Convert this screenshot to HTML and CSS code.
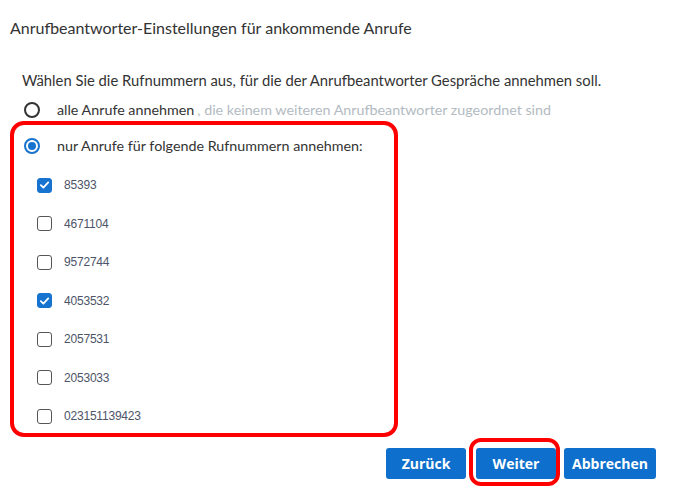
FILE: index.html
```html
<!DOCTYPE html>
<html lang="de">
<head>
<meta charset="utf-8">
<link rel="stylesheet" href="styles.css">
</head>
<body>
<div class="page">
  <h1 class="title">Anrufbeantworter-Einstellungen für ankommende Anrufe</h1>
  <p class="intro">Wählen Sie die Rufnummern aus, für die der Anrufbeantworter Gespräche annehmen soll.</p>
  <div class="radio-row first">
    <span class="radio"></span>
    <span class="label">alle Anrufe annehmen</span><span class="hint">, die keinem weiteren Anrufbeantworter zugeordnet sind</span>
  </div>
  <div class="highlight">
    <div class="radio-row second">
      <span class="radio on"><span class="dot"></span></span>
      <span class="label">nur Anrufe für folgende Rufnummern annehmen:</span>
    </div>
    <ul class="numbers">
      <li><span class="check on"><svg viewBox="0 0 16 16" width="16" height="16"><path d="M3.5 8.2 L6.6 11.2 L12.6 4.8" fill="none" stroke="#fff" stroke-width="2.2" stroke-linecap="round" stroke-linejoin="round"/></svg></span><span class="num">85393</span></li>
      <li><span class="check"></span><span class="num">4671104</span></li>
      <li><span class="check"></span><span class="num">9572744</span></li>
      <li><span class="check on"><svg viewBox="0 0 16 16" width="16" height="16"><path d="M3.5 8.2 L6.6 11.2 L12.6 4.8" fill="none" stroke="#fff" stroke-width="2.2" stroke-linecap="round" stroke-linejoin="round"/></svg></span><span class="num">4053532</span></li>
      <li><span class="check"></span><span class="num">2057531</span></li>
      <li><span class="check"></span><span class="num">2053033</span></li>
      <li><span class="check"></span><span class="num">023151139423</span></li>
    </ul>
  </div>
  <div class="buttons">
    <button class="btn">Zurück</button>
    <button class="btn marked">Weiter</button>
    <button class="btn wide">Abbrechen</button>
  </div>
</div>
</body>
</html>
```

FILE: styles.css
```css
html, body {
  margin: 0;
  padding: 0;
  background: #fff;
}
body {
  font-family: Lato, "Open Sans", sans-serif;
  color: #333;
  width: 691px;
  height: 489px;
  overflow: hidden;
}
.page {
  padding: 18px 0 0 10px;
}
.title {
  margin: 0;
  font-size: 16px;
  font-weight: normal;
  line-height: 20px;
  color: #333;
}
.intro {
  margin: 32px 0 0 12px;
  font-size: 14.8px;
  line-height: 20px;
}
.radio-row {
  display: flex;
  align-items: center;
  font-size: 14.3px;
  line-height: 20px;
}
.radio-row.first {
  margin: 10px 0 0 14px;
}
.radio-row.first .label {
  margin-left: 17px;
}
.hint {
  color: #b3bbc2;
  margin-left: 3px;
}
.radio {
  width: 12px;
  height: 12px;
  border: 2px solid #333;
  border-radius: 50%;
  display: flex;
  align-items: center;
  justify-content: center;
  flex: none;
}
.radio.on {
  border-color: #1673cf;
}
.dot {
  width: 8px;
  height: 8px;
  border-radius: 50%;
  background: #1673cf;
}
.highlight {
  width: 380px;
  height: 308px;
  border: 4px solid #f00;
  border-radius: 14px;
  margin-top: 1px;
}
.radio-row.second {
  margin: 11px 0 0 10px;
}
.radio-row.second .label {
  margin-left: 17px;
}
.numbers {
  list-style: none;
  margin: 21px 0 0 23px;
  padding: 0;
  display: flex;
  flex-direction: column;
  gap: 22.5px;
}
.numbers li {
  display: flex;
  align-items: center;
  height: 16px;
}
.check {
  width: 13px;
  height: 13px;
  border: 1.5px solid #555;
  border-radius: 3px;
  flex: none;
  display: flex;
  align-items: center;
  justify-content: center;
}
.check.on {
  background: #1673cf;
  border-color: #1673cf;
}
.check svg {
  display: block;
}
.num {
  margin-left: 12px;
  font-family: "Liberation Sans", sans-serif;
  font-size: 12px;
  letter-spacing: -0.2px;
  color: #4d5468;
}
.buttons {
  display: flex;
  margin: 11px 0 0 376px;
  gap: 10px;
}
.btn {
  position: relative;
  width: 80px;
  height: 31px;
  border: none;
  border-radius: 3px;
  background: #0f6fcc;
  color: #fff;
  font-family: "Open Sans", Lato, sans-serif;
  font-weight: bold;
  font-size: 14px;
  padding: 0;
}
.btn.wide {
  width: 92px;
  margin-left: -2px;
}
.btn.marked::after {
  content: "";
  position: absolute;
  left: -7px;
  top: -10px;
  right: -4px;
  bottom: -7px;
  border: 4px solid #f00;
  border-radius: 12px;
}
```
